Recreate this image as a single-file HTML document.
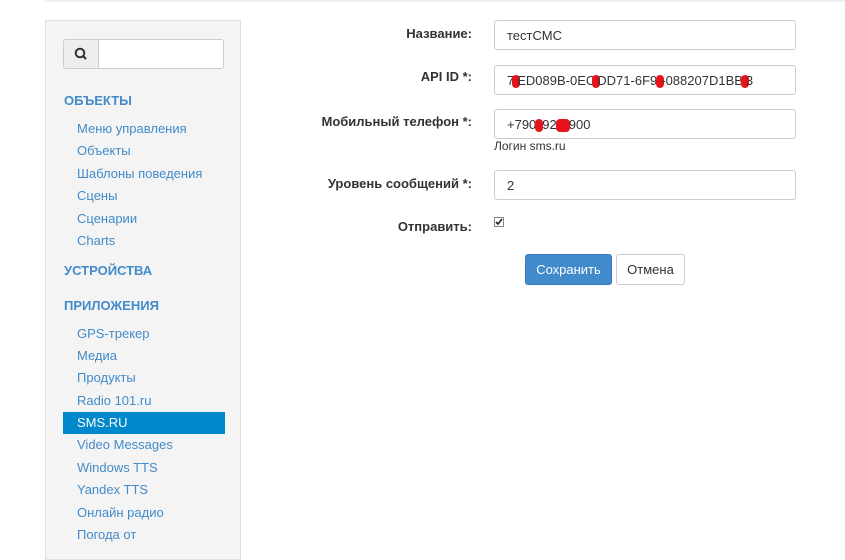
<!DOCTYPE html>
<html><head><meta charset="utf-8"><style>
body{margin:0;width:845px;height:546px;overflow:hidden;background:#fff;font-family:"Liberation Sans",sans-serif;font-size:13px;color:#333;position:relative}
.top{position:absolute;left:45px;top:0;width:800px;height:2px;background:#f0f0f0}
.side{position:absolute;left:45px;top:20px;width:196px;height:540px;background:#f4f4f4;border:1px solid #e0e0e0;box-sizing:border-box}
.search{position:absolute;left:17px;top:18px;width:161px;height:30px;border:1px solid #ccc;border-radius:3px;background:#fff;box-sizing:border-box}
.search .b{position:absolute;left:0;top:0;width:34px;height:28px;background:#eee;border-right:1px solid #ccc}
.h{position:absolute;left:18px;font-weight:bold;color:#428bca;font-size:13px}
.i{position:absolute;left:31px;color:#428bca;font-size:13px}
.act{position:absolute;left:17px;width:162px;height:22px;background:#0088cc;color:#fff}
.act span{position:absolute;left:14px;top:3px}
.lbl{position:absolute;right:373px;font-weight:bold;font-size:13px;text-align:right;white-space:nowrap}
.inp{position:absolute;left:494px;width:302px;height:30px;border:1px solid #ccc;border-radius:3px;box-sizing:border-box;padding:8px 12px;font-size:13px;line-height:13px;white-space:nowrap}
.r{display:inline-block;width:8px;height:13px;background:#e8141c;border-radius:4px;vertical-align:-3px}
.btn{position:absolute;top:254px;height:31px;border-radius:3px;box-sizing:border-box;font-size:13px;text-align:center;line-height:29px}
</style></head><body>
<div class="top"></div>
<div class="side">
<div class="search"><div class="b"><svg width="34" height="28"><circle cx="16" cy="13" r="4.3" fill="none" stroke="#333" stroke-width="2"/><line x1="19" y1="16" x2="22" y2="19" stroke="#333" stroke-width="2.2"/></svg></div></div>
<div class="h" style="top:72px">ОБЪЕКТЫ</div>
<div class="i" style="top:100px">Меню управления</div>
<div class="i" style="top:122px">Объекты</div>
<div class="i" style="top:145px">Шаблоны поведения</div>
<div class="i" style="top:167px">Сцены</div>
<div class="i" style="top:190px">Сценарии</div>
<div class="i" style="top:212px">Charts</div>
<div class="h" style="top:242px">УСТРОЙСТВА</div>
<div class="h" style="top:277px">ПРИЛОЖЕНИЯ</div>
<div class="i" style="top:305px">GPS-трекер</div>
<div class="i" style="top:327px">Медиа</div>
<div class="i" style="top:349px">Продукты</div>
<div class="i" style="top:372px">Radio 101.ru</div>
<div class="act" style="top:391px"><span>SMS.RU</span></div>
<div class="i" style="top:416px">Video Messages</div>
<div class="i" style="top:439px">Windows TTS</div>
<div class="i" style="top:461px">Yandex TTS</div>
<div class="i" style="top:484px">Онлайн радио</div>
<div class="i" style="top:506px">Погода от</div>
</div>
<div class="lbl" style="top:26px">Название:</div>
<div class="inp" style="top:20px">тестСМС</div>
<div class="lbl" style="top:69px">API ID *:</div>
<div class="inp" style="top:65px">7<span class="r" style="margin:0 -3px 0 -2px"></span>ED089B-0EC<span class="r" style="margin:0 -3px"></span>DD71-6F9<span class="r" style="margin:0 -3px 0 -1px"></span>-088207D1BB<span class="r" style="margin:0 -3px 0 -2px"></span>3</div>
<div class="lbl" style="top:114px">Мобильный телефон *:</div>
<div class="inp" style="top:109px">+790<span class="r" style="margin:0 -1px"></span>92<span class="r" style="width:14px;margin:0 -1px"></span>900</div>
<div style="position:absolute;left:494px;top:139px;font-size:12px">Логин sms.ru</div>
<div class="lbl" style="top:176px">Уровень сообщений *:</div>
<div class="inp" style="top:170px">2</div>
<div class="lbl" style="top:219px">Отправить:</div>
<svg style="position:absolute;left:494px;top:217px" width="10" height="10"><rect x="0.5" y="0.5" width="9" height="9" fill="#fff" stroke="#888"/><path d="M2 5l2 2 4-5" stroke="#222" stroke-width="1.6" fill="none"/></svg>
<div class="btn" style="left:525px;width:87px;background:#428bca;border:1px solid #357ebd;color:#fff">Сохранить</div>
<div class="btn" style="left:616px;width:69px;background:#fff;border:1px solid #ccc;color:#333">Отмена</div>
</body></html>
